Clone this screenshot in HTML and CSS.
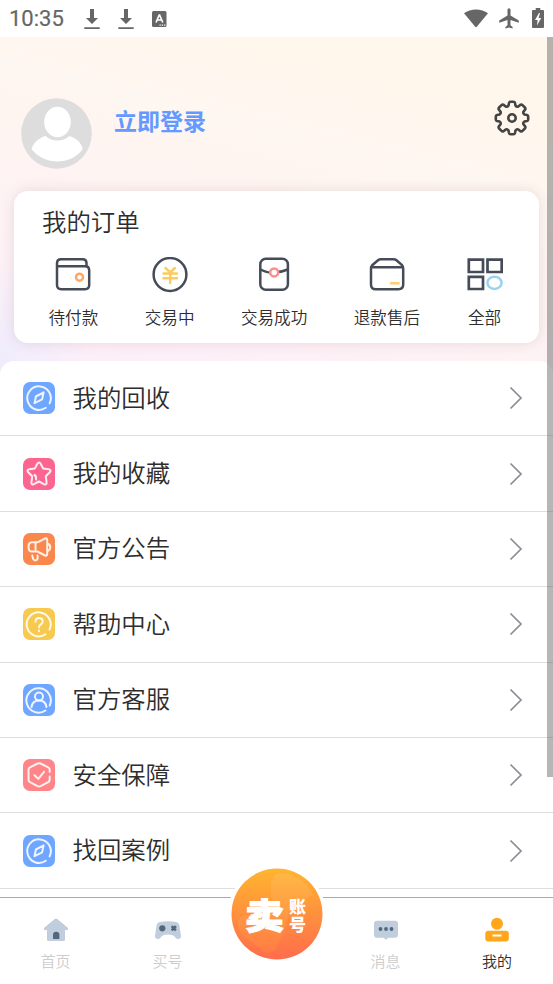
FILE: index.html
```html
<!DOCTYPE html>
<html lang="zh-CN">
<head>
<meta charset="utf-8">
<title>我的</title>
<link rel="stylesheet" href="styles.css">
</head>
<body>
<svg width="0" height="0" class="defs">
  <defs>
    <symbol id="download" viewBox="0 0 16 22"><path d="M6 1h4v9h4l-6 6-6-6h4zM.3 19.2h15.4v1.8H.3z" fill="#666"/></symbol>
    <symbol id="compass" viewBox="0 0 32 32"><path d="M26.600 21.400A11.800 11.800 0 1 0 22.800 25.800M11.500 21.200l1.400-6.700 7.700-4.200-1.500 7z"/></symbol>
    <symbol id="chevron" viewBox="0 0 14 24"><path d="M1.500 1.500 12 12 1.500 22.500" fill="none" stroke="#8b8d95" stroke-width="1.700"/></symbol>
  </defs>
</svg>
<div class="screen">
  <header class="status">
    <div class="status-left">
      <span class="time">10:35</span>
      <svg width="16" height="22"><use href="#download"/></svg>
      <svg width="16" height="22"><use href="#download"/></svg>
      <svg width="15" height="16" viewBox="0 0 15 16"><rect width="14.500" height="16" rx="1.500" fill="#666"/><path d="M4 11.500 7.200 4h.4l3.200 7.500M5.200 9h4.400" fill="none" stroke="#fff" stroke-width="1.700"/><path d="M7.500 14.200h1.300m1 0h1.300m1 0h1.300" stroke="#fff" stroke-width="1.200"/></svg>
    </div>
    <div class="status-right">
      <svg width="24" height="19" viewBox="0 0 24 19"><path d="M0 4.200C6.500-.9 17.500-.9 24 4.200L13 17.600q-1 1.200-2 0z" fill="#666"/></svg>
      <svg width="20" height="21" viewBox="0 0 20 21"><path d="M8.500 1.800a1.500 1.500 0 0 1 3 0v5.600l8.300 5.200v2.100l-8.300-2.600v5.200l2.100 1.600V20.500L10 19.500l-3.600 1V18.900l2.100-1.600v-5.200L.2 14.700v-2.100l8.300-5.200z" fill="#666"/></svg>
      <svg width="12" height="20" viewBox="0 0 12 20"><path d="M3.700 0h4.600v2H11q1 0 1 1v16q0 1-1 1H1q-1 0-1-1V3q0-1 1-1h2.700z" fill="#666"/><path d="M7 5 3 12h2.600L5 17.500 9.200 10H6.600L8 5z" fill="#fff"/></svg>
    </div>
  </header>

  <main class="page">
    <section class="profile">
      <svg class="avatar" width="71" height="71" viewBox="0 0 71 71"><circle cx="35.500" cy="35.500" r="35.300" fill="#ddd"/><ellipse cx="36.500" cy="24" rx="13.300" ry="15.300" fill="#fff"/><path d="M24.500 38c6.500 6 17.500 6 24 0 7 2 12 7 13.300 13-12 16.500-38 17-51.300 0C12.500 44.500 18 40 24.500 38z" fill="#fff"/></svg>
      <a class="login">立即登录</a>
      <svg class="gear" width="36" height="36" viewBox="-18 -18 36 36"><path d="M-1.500-16.200H1.500Q2.700-16.200 3-15L3.500-12.500Q4.700-10.700 6.300-11.500L8.600-13.300Q9.700-13.700 10.500-12.900L12.900-10.500Q13.700-9.700 13.300-8.600L11.500-6.300Q10.700-4.700 12.500-3.500L15-3Q16.200-2.700 16.200-1.500V1.500Q16.200 2.700 15 3L12.500 3.500Q10.700 4.700 11.500 6.300L13.300 8.600Q13.700 9.700 12.900 10.500L10.500 12.900Q9.700 13.700 8.600 13.300L6.300 11.500Q4.700 10.700 3.500 12.500L3 15Q2.700 16.200 1.500 16.200H-1.500Q-2.700 16.200-3 15L-3.500 12.500Q-4.700 10.700-6.300 11.500L-8.600 13.300Q-9.700 13.700-10.500 12.900L-12.900 10.500Q-13.700 9.700-13.300 8.600L-11.500 6.300Q-10.700 4.700-12.500 3.500L-15 3Q-16.200 2.700-16.200 1.500V-1.500Q-16.200-2.700-15-3L-12.500-3.500Q-10.700-4.700-11.500-6.300L-13.300-8.600Q-13.700-9.700-12.900-10.500L-10.500-12.900Q-9.700-13.700-8.600-13.300L-6.300-11.500Q-4.700-10.700-3.500-12.500L-3-15Q-2.700-16.200-1.500-16.200Z"/><circle r="3.700"/></svg>
    </section>

    <section class="orders">
      <h2>我的订单</h2>
      <div class="order-list">
        <div class="order"><svg viewBox="0 0 36 36"><path d="M2 10.500V6.200Q2 2.300 6 2.300H27.500Q31.500 2.300 31.500 6.200V9.500M2 9.300H30Q34.200 9.300 34.200 13.500V28Q34.200 32.200 30 32.200H6.200Q2 32.200 2 28V9"/><circle cx="24.500" cy="20.200" r="3.500" stroke="#ffa661" stroke-width="2.500"/></svg><span>待付款</span></div>
        <div class="order"><svg viewBox="0 0 36 36"><circle cx="18" cy="17.500" r="16.400"/><path d="m13.500 11 4.700 4.500 4.700-4.500M11.500 16.500h13.400M11.500 21.300h13.400M18.200 16v10" stroke="#ffca5d" stroke-width="2.500"/></svg><span>交易中</span></div>
        <div class="order"><svg viewBox="0 0 36 36"><rect x="4.300" y="1.800" width="27.600" height="31" rx="5.500"/><path d="M4.500 12.500q8 4 13.500 3 7 0 13.700-3"/><circle cx="18.200" cy="15.400" r="4" fill="#fff" stroke="#ff8c8c" stroke-width="2.500"/></svg><span>交易成功</span></div>
        <div class="order"><svg viewBox="0 0 36 36"><path d="M3.200 8.300 9 3.200Q10.200 2.200 12 2.200H24.500Q26.300 2.200 27.500 3.200L33 8Q34.200 9.500 34.200 11.500V27.500Q34.200 32.200 29.500 32.200H6.700Q2 32.200 2 27.500V11.500Q2 9.500 3.200 8.300M2 10.200H34"/><path d="M22 26.200h7.500" stroke="#ffd06b" stroke-width="2.500"/></svg><span>退款售后</span></div>
        <div class="order"><svg viewBox="0 0 36 36"><path d="M1.800 2.700H16V15H1.800zM20.500 2.700H34.700V15H20.500zM1.800 19.800H16V32H1.800z" stroke-width="2.700"/><ellipse cx="27.500" cy="25.800" rx="7.100" ry="6.100" stroke="#9bd2f0" stroke-width="2.500"/></svg><span>全部</span></div>
      </div>
    </section>

    <nav class="menu">
      <a class="row"><svg class="badge blue"><use href="#compass"/></svg><span>我的回收</span><svg class="arrow"><use href="#chevron"/></svg></a>
      <a class="row"><svg class="badge pink" viewBox="0 0 32 32"><path d="M14.200 6Q16 3 17.800 6l2.300 4.400 5.700.9q3 .7 1 3l-4 4 .8 6q.2 3-2.700 1.900L16 23.500l-5.200 2.700q-2.600.8-2.400-1.900l.8-6-4-4q-2-2.300 1-3l5.700-.9zM11.500 17q2 1 1.500 4.500"/></svg><span>我的收藏</span><svg class="arrow"><use href="#chevron"/></svg></a>
      <a class="row"><svg class="badge orange" viewBox="0 0 32 32"><path d="M14.500 9.300H9Q5.500 9.500 5.500 14T9 18.500h5.500l7.500 4q2.200.8 2.200-1.500V7q0-2.300-2.200-1.500zM24.300 10.500q3.200 1 3 4t-3 3.500M9.300 22.500q.5 5 3.200 5 2.800-.5 2-5M12.500 10.500v6"/></svg><span>官方公告</span><svg class="arrow"><use href="#chevron"/></svg></a>
      <a class="row"><svg class="badge yellow" viewBox="0 0 32 32"><path d="M26.500 21.500A12 12 0 1 0 22.500 26.200M12.500 13.700q0-3.700 3.600-3.700t3.600 3.500q0 2-2 3-1.700 1-1.700 3M16 22.500v.7"/></svg><span>帮助中心</span><svg class="arrow"><use href="#chevron"/></svg></a>
      <a class="row"><svg class="badge blue" viewBox="0 0 32 32"><path d="M26.700 21.500A12.200 12.200 0 1 0 22.500 26.500M8.500 23q1-6.500 7.500-6.500t7.500 6.500"/><circle cx="16" cy="12.500" r="4"/></svg><span>官方客服</span><svg class="arrow"><use href="#chevron"/></svg></a>
      <a class="row"><svg class="badge coral" viewBox="0 0 32 32"><path d="M26.700 13V10.500q0-1.500-1.500-2.200L17.500 4.500Q16 4 14.500 4.500L7 8.300q-1.500.7-1.500 2.200v10.300q0 1.500 1.500 2.400l7.500 4q1.500.7 3 0l7.700-4q1.500-.9 1.500-2.700v-3M11.500 16.200l3.800 3.700 5.700-7"/></svg><span>安全保障</span><svg class="arrow"><use href="#chevron"/></svg></a>
      <a class="row"><svg class="badge blue"><use href="#compass"/></svg><span>找回案例</span><svg class="arrow"><use href="#chevron"/></svg></a>
    </nav>
    <div class="scrollbar"></div>
  </main>

  <footer class="tabs">
    <a class="tab"><svg viewBox="0 0 28 28"><path d="M12.700 3q1.300-1 2.600 0L26 12q1 1.500-.7 2H23v9.500q0 1.500-1.500 1.500h-15Q5 25 5 23.500V14H2.700Q1 13.500 2 12z" fill="#c0cddc"/><path d="M11 23v-4a3.200 3.200 0 0 1 6.400 0v4z" fill="#52677c"/></svg><span>首页</span></a>
    <a class="tab"><svg viewBox="0 0 28 28"><path d="M6 6q8-1.500 16 0 3 .5 3.500 4l1.500 10q0 3-3 3-2 0-3.500-2.500-1.500-2-6.500-2t-6.500 2Q6 23 4 23q-3 0-3-3L2.500 10Q3 6.500 6 6z" fill="#c0cddc"/><circle cx="8.300" cy="12.300" r="3.100" fill="#52677c"/><path d="m17.700 10.200 4.200 4.200m0-4.200-4.200 4.200" stroke="#52677c" stroke-width="2.500"/></svg><span>买号</span></a>
    <span></span>
    <a class="tab"><svg viewBox="0 0 28 28"><path d="M5 4.700h18q3 0 3 3v11q0 3-3 3h-6.500L14 23.800l-2.500-2.100H5q-3 0-3-3v-11q0-3 3-3z" fill="#c0cddc"/><g fill="#52677c"><circle cx="8.500" cy="13" r="1.900"/><circle cx="14" cy="13" r="1.900"/><circle cx="19.500" cy="13" r="1.900"/></g></svg><span>消息</span></a>
    <a class="tab active"><svg viewBox="0 0 28 28"><circle cx="14" cy="7.700" r="6" fill="#ffa61b"/><rect x="2.300" y="14.800" width="23.500" height="10.800" rx="3" fill="#ffa61b"/><path d="M9.500 19.500h9" stroke="#fff" stroke-width="2"/></svg><span>我的</span></a>
    <a class="sell">
      <svg class="sell-bg" viewBox="0 0 92 92"><defs><linearGradient id="glow" x1="0" y1="0" x2="0" y2="1"><stop stop-color="#ffb52f"/><stop offset="1" stop-color="#ff6c4c"/></linearGradient><linearGradient id="ribbon" x1="0" y1="0" x2="0" y2="1"><stop stop-color="#ffc163"/><stop offset="1" stop-color="#ff8a37"/></linearGradient></defs><circle cx="46" cy="46" r="45.500" fill="url(#glow)"/><path d="M40 18C40 6 48 3 57 6 70 10 78 18 82 27Q72 33 60 34L54 60 46 79Q40 88 32 83L14 69Q2 57 10 48L40 44z" fill="url(#ribbon)" opacity=".42"/></svg>
      <span class="sell-main">卖</span>
      <span class="sell-side">账号</span>
    </a>
  </footer>
</div>
</body>
</html>
```
FILE: styles.css
```css
* { box-sizing: border-box; }
body { margin: 0; background: #fff; color: #2d2d2d; font-family: "Noto Sans CJK SC", sans-serif; }
.defs { position: absolute; }
.screen { height: 984px; display: flex; flex-direction: column; overflow: hidden; }

.status { height: 37px; flex: none; display: flex; justify-content: space-between; padding: 0 9px 0 9px; }
.status-left, .status-right { display: flex; align-items: center; }
.status-left { gap: 18px; }
.time { width: 57px; font: 400 22px/39px Roboto, sans-serif; color: #666; -webkit-text-stroke: .2px #666; }
.status-right { gap: 11px; }
.status-right svg:last-child { margin-left: 2px; margin-bottom: 2px; }

.page {
  flex: 1; min-height: 0; overflow: hidden; position: relative;
  background:
    radial-gradient(ellipse 90px 100px at 0 325px, #efecfd 0, #efecfd00 100%),
    linear-gradient(194deg, #fff7ec 0, #fff7ed 100px, #fef6f1 170px, #fef3f3 280px, #fdeff8 420px);
}
.profile { height: 154px; padding: 61px 23.500px 0 21px; display: flex; align-items: flex-start; }
.login { margin-left: 22px; padding-top: 6px; font-size: 23px; line-height: 32px; font-weight: 700; color: #6499ff; }
.gear { margin: 2px 0 0 auto; fill: none; stroke: #444; stroke-width: 2.600; }

.orders { height: 152px; margin: 0 14px; background: #fff; border-radius: 14px; box-shadow: 0 0 14px rgba(90, 50, 60, .13); }
.orders h2 { margin: 0; padding: 13px 0 0 28px; font-size: 24.400px; line-height: 34px; font-weight: 350; }
.order-list { display: flex; justify-content: space-between; padding: 19px 36.500px 0 34.500px; }
.order { display: flex; flex-direction: column; align-items: center; font-size: 16.600px; line-height: 24px; font-weight: 350; }
.order svg { width: 36px; height: 36px; fill: none; stroke: #454c58; stroke-width: 2.500; stroke-linecap: round; }
.order span { margin-top: 12px; }

.menu { margin-top: 18px; background: #fff; border-radius: 14px 14px 0 0; height: 600px; }
.row { height: 75.400px; padding: 0 30px 0 23px; display: flex; align-items: center; border-bottom: 1px solid #dedede; font-size: 24.400px; line-height: 36px; font-weight: 350; }
.row span { margin: 0 0 3px 17.500px; }
.badge { width: 32px; height: 32px; border-radius: 7px; fill: none; stroke: #fff; stroke-opacity: .88; stroke-width: 2; stroke-linecap: round; stroke-linejoin: round; }
.blue { background: #6fa6ff; }
.pink { background: #fb6590; }
.orange { background: #fa874b; }
.yellow { background: #f7ca4f; }
.coral { background: #ff8589; }
.arrow { width: 14px; height: 24px; margin-left: auto; }
.scrollbar { position: absolute; right: 0; top: 0; width: 6px; height: 740px; background: rgba(80, 80, 80, .42); }

.tabs { position: relative; flex: none; height: 87px; background: #fff; border-top: 1px solid #aaa; display: grid; grid-template-columns: 111px 113px 106px 111px 112px; }
.tab { display: flex; flex-direction: column; align-items: center; padding-top: 18px; font-size: 15px; line-height: 22px; font-weight: 350; color: #cdcdcd; }
.tab svg { width: 28px; height: 28px; margin-bottom: 6px; }
.active { color: #2d2d2d; }
.sell { position: absolute; left: 228px; top: -33px; width: 98px; height: 98px; border-radius: 50%; background: #fff; display: flex; align-items: center; padding-left: 17px; color: #fff; font-weight: 900; }
.sell-bg { position: absolute; left: 3px; top: 3px; width: 92px; height: 92px; }
.sell-main, .sell-side { position: relative; }
.sell-main { font-size: 39px; line-height: 44px; -webkit-text-stroke: 1.300px #fff; transform: scaleY(.91); }
.sell-side { margin: 3px 0 0 4px; font-size: 17px; line-height: 18px; writing-mode: vertical-rl; letter-spacing: 1px; }
```
